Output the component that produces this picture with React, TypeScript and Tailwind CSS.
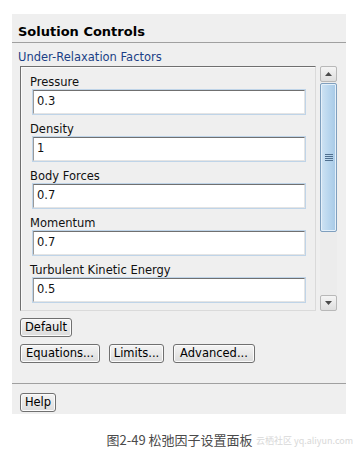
const FIELDS = [
  { label: 'Pressure', value: '0.3' },
  { label: 'Density', value: '1' },
  { label: 'Body Forces', value: '0.7' },
  { label: 'Momentum', value: '0.7' },
  { label: 'Turbulent Kinetic Energy', value: '0.5' },
];

const FONT = "font-['DejaVu_Sans',Verdana,sans-serif]";

const BTN = `h-[19px] flex items-center justify-center border border-[#707070] rounded-[3px]
  bg-gradient-to-b from-[#f4f4f4] to-[#dcdcdc] shadow-[inset_0_0_0_1px_#fbfbfb]
  text-[11.5px] leading-none text-black`;

function Field({ label, value }: { label: string; value: string }) {
  return (
    <div className="pt-[7px]">
      <div className="h-[14px] leading-[14px] text-[11.5px] text-[#111] ml-[9px]">{label}</div>
      <div className="ml-[11px] w-[274px] h-[26px] border border-[#bfd4e8] bg-white">
        <div className="h-full border-t border-l border-t-[#707070] border-l-[#9a9a9a] border-r border-b border-r-[#e4e4e4] border-b-[#e4e4e4] flex items-center pl-[3px] text-[11.5px] text-[#111]">
          {value}
        </div>
      </div>
    </div>
  );
}

function Scrollbar() {
  return (
    <div className="w-[17px] h-[245px] flex flex-col bg-[#ececec]">
      <div className="h-[16px] border border-[#b8b8b8] rounded-[2px] bg-gradient-to-b from-[#f5f5f5] to-[#dedede] flex items-center justify-center">
        <svg width="7" height="4" viewBox="0 0 7 4">
          <path d="M0 4 L3.5 0 L7 4 Z" fill="#4a4a4a" />
        </svg>
      </div>
      <div className="mt-px h-[149px] border border-[#7f9fbe] rounded-[2px] bg-gradient-to-r from-[#cfe3f3] via-[#b9d6ee] to-[#a7c9e6] shadow-[inset_0_0_0_1px_#e4f0fa] flex items-center justify-center">
        <svg width="8" height="8" viewBox="0 0 8 8">
          <path d="M0 0.5 H8 M0 2.5 H8 M0 4.5 H8 M0 6.5 H8" stroke="#4f6f8f" strokeWidth="1" />
        </svg>
      </div>
      <div className="flex-1" />
      <div className="h-[16px] border border-[#b8b8b8] rounded-[2px] bg-gradient-to-b from-[#f5f5f5] to-[#dedede] flex items-center justify-center">
        <svg width="7" height="4" viewBox="0 0 7 4">
          <path d="M0 0 L3.5 4 L7 0 Z" fill="#4a4a4a" />
        </svg>
      </div>
    </div>
  );
}

export default function App() {
  return (
    <div className={`w-[357px] h-[460px] bg-white pt-[14px] pl-[12px] ${FONT}`}>
      <div className="w-[334px] h-[400px] bg-[#efefef] flex flex-col">
        <div className="h-[28px] pt-[8px] pl-[6px] text-[13px] leading-[20px] font-bold text-black">
          Solution Controls
        </div>
        <div className="h-px bg-[#a0a0a0]" />
        <div className="mt-[7px] pl-[6px] text-[11.5px] leading-[14px] text-[#1b3f86]">
          Under-Relaxation Factors
        </div>
        <div className="mt-[2px] ml-[8px] flex gap-[4px]">
          <div className="w-[296px] h-[245px] border border-t-[#6f6f6f] border-l-[#6f6f6f] border-r-[#dadada] border-b-[#dadada] shadow-[inset_1px_1px_0_#fafafa] pt-px">
            {FIELDS.map((f) => (
              <Field key={f.label} label={f.label} value={f.value} />
            ))}
          </div>
          <Scrollbar />
        </div>
        <div className="mt-[7px] ml-[8px]">
          <button className={`${BTN} w-[52px]`}>Default</button>
        </div>
        <div className="mt-[7px] ml-[8px] flex gap-[9px]">
          <button className={`${BTN} w-[80px]`}>Equations...</button>
          <button className={`${BTN} w-[55px]`}>Limits...</button>
          <button className={`${BTN} w-[82px]`}>Advanced...</button>
        </div>
        <div className="mt-[20px] h-px bg-[#a0a0a0]" />
        <div className="mt-[9px] ml-[8px]">
          <button className={`${BTN} w-[36px]`}>Help</button>
        </div>
      </div>
      <div className="relative mt-[17px] -ml-[12px] flex justify-center pl-[2px]">
        <span className="text-[13px] leading-[18px] text-[#4a4a4a] font-['Noto_Sans_CJK_SC',sans-serif]">
          图2-49 松弛因子设置面板
        </span>
        <span className="absolute left-[256px] top-[2px] whitespace-nowrap text-[9px] leading-[16px] text-[#cfcfcf] opacity-80 font-['Noto_Sans_CJK_SC',sans-serif]">
          云栖社区 yq.aliyun.com
        </span>
      </div>
    </div>
  );
}
